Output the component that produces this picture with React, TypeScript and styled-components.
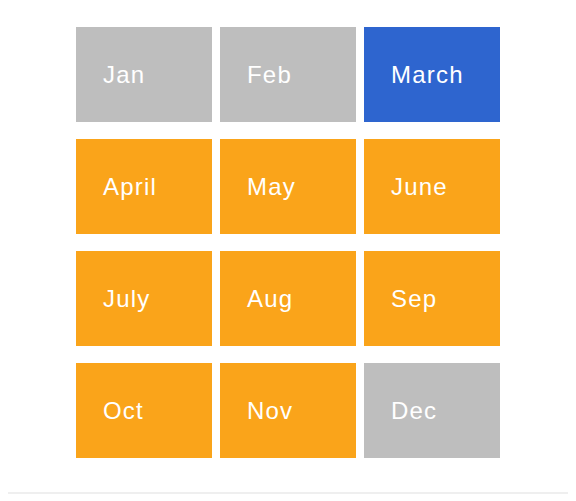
import React from 'react';
import styled, { createGlobalStyle } from 'styled-components';

const GlobalStyle = createGlobalStyle`
  body {
    margin: 0;
    background: #ffffff;
    font-family: 'Liberation Sans', Arial, sans-serif;
  }
`;

type Tone = 'off' | 'active' | 'on';

const months: { label: string; tone: Tone }[] = [
  { label: 'Jan', tone: 'off' },
  { label: 'Feb', tone: 'off' },
  { label: 'March', tone: 'active' },
  { label: 'April', tone: 'on' },
  { label: 'May', tone: 'on' },
  { label: 'June', tone: 'on' },
  { label: 'July', tone: 'on' },
  { label: 'Aug', tone: 'on' },
  { label: 'Sep', tone: 'on' },
  { label: 'Oct', tone: 'on' },
  { label: 'Nov', tone: 'on' },
  { label: 'Dec', tone: 'off' },
];

const toneColors: Record<Tone, string> = {
  off: '#bebebe',
  active: '#2e65cf',
  on: '#faa41a',
};

export default function App() {
  return (
    <>
      <GlobalStyle />
      <Wrapper>
        <Grid>
          {months.map((m) => (
            <Cell key={m.label} $tone={m.tone}>
              {m.label}
            </Cell>
          ))}
        </Grid>
        <Divider />
      </Wrapper>
    </>
  );
}

const Wrapper = styled.div`
  padding: 27px 8px 0;
`;

const Grid = styled.div`
  display: grid;
  grid-template-columns: repeat(3, 136px);
  grid-auto-rows: 95px;
  column-gap: 8px;
  row-gap: 17px;
  justify-content: center;
`;

const Cell = styled.div<{ $tone: Tone }>`
  display: flex;
  align-items: center;
  padding-left: 27px;
  background: ${(p) => toneColors[p.$tone]};
  color: #ffffff;
  font-size: 24px;
  letter-spacing: 1.2px;
`;

const Divider = styled.div`
  margin-top: 34px;
  height: 2px;
  background: #efefef;
`;
